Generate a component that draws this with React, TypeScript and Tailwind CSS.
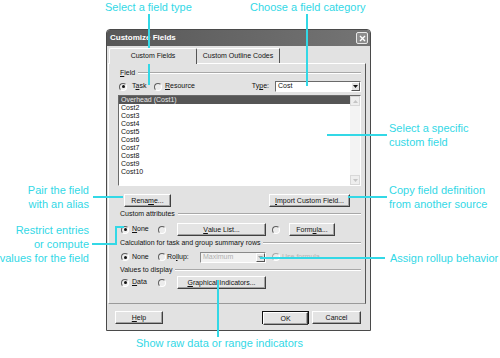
import type { ReactNode } from 'react';

// Small Win2000-style dialog with cyan callouts around it

function Radio({ on, dim }: { on?: boolean; dim?: boolean }) {
  return (
    <span
      className={`flex h-[8px] w-[8px] shrink-0 items-center justify-center rounded-full border border-r-white border-b-white bg-[#ececec] ${
        dim ? 'border-t-[#a8a8a8] border-l-[#a8a8a8]' : 'border-t-[#5e5e5e] border-l-[#5e5e5e]'
      }`}
    >
      {on && <span className="h-[3px] w-[3px] rounded-full bg-[#111]" />}
    </span>
  );
}

function Btn({ className = '', children }: { className?: string; children: ReactNode }) {
  return (
    <div
      className={`flex h-[13px] shrink-0 items-center justify-center border border-t-white border-l-white border-r-[#404040] border-b-[#404040] bg-[#e4e4e4] text-[7px] leading-none text-[#111] shadow-[inset_-1px_-1px_0_#a2a2a2] ${className}`}
    >
      {children}
    </div>
  );
}

function Group({ className = '', children }: { className?: string; children: ReactNode }) {
  return (
    <div className={`flex h-[10px] items-center gap-[3px] pl-[2px] ${className}`}>
      <span className="text-[7px] leading-[10px]">{children}</span>
      <div className="h-[2px] flex-1 border-t border-b border-t-[#a8a8a8] border-b-white" />
    </div>
  );
}

function Arrow({ dim }: { dim?: boolean }) {
  return (
    <div className="flex h-full w-[9px] items-center justify-center border border-t-white border-l-white border-r-[#555] border-b-[#555] bg-[#e4e4e4]">
      <svg width="5" height="3" viewBox="0 0 5 3">
        <path d="M0 0h5L2.5 3z" fill={dim ? '#9a9a9a' : '#111'} />
      </svg>
    </div>
  );
}

const items = ['Cost2', 'Cost3', 'Cost4', 'Cost5', 'Cost6', 'Cost7', 'Cost8', 'Cost9', 'Cost10'];

function Dialog() {
  return (
    <div className="flex h-[302px] w-[265px] flex-col rounded-t-[4px] border border-[#4a4a4a] bg-[#e2e2e2] text-[7px] text-[#111]">
      {/* barre de titre */}
      <div className="flex h-[16px] items-center justify-between rounded-t-[3px] bg-gradient-to-r from-[#585858] to-[#747474] pl-[3px] pr-[2px]">
        <span className="text-[8px] font-bold leading-none text-white">Customize Fields</span>
        <div className="flex h-[12px] w-[12px] items-center justify-center rounded-[2px] border border-[#e8e8e8] bg-[#8d8d8d]">
          <svg width="7" height="7" viewBox="0 0 7 7">
            <path d="M1 1l5 5M6 1L1 6" stroke="#fff" strokeWidth="1.4" />
          </svg>
        </div>
      </div>

      {/* onglets */}
      <div className="mt-[1px] flex h-[16px] items-end pl-[2px]">
        <div className="relative z-10 -mb-px flex h-[16px] w-[88px] items-center justify-center rounded-t-[2px] border-t border-l border-t-white border-l-white border-r border-r-[#555] bg-[#e2e2e2]">
          Custom Fields
        </div>
        <div className="flex h-[15px] w-[83px] items-center justify-center border-t border-t-white border-r border-r-[#555]">
          Custom Outline Codes
        </div>
      </div>

      {/* panneau */}
      <div className="ml-[1px] mr-[4px] flex h-[241px] flex-col border border-t-white border-l-white border-r-[#555] border-b-[#9a9a9a] pl-[9px] pr-[4px] pt-[4px]">
        <Group>
          <u>F</u>ield
        </Group>

        <div className="mt-[3px] flex h-[11px] items-center">
          <div className="flex w-[36px] items-center gap-[5px] pl-[1px]">
            <Radio on />
            <span>
              T<u>a</u>sk
            </span>
          </div>
          <div className="flex items-center gap-[3px]">
            <Radio />
            <span>
              <u>R</u>esource
            </span>
          </div>
          <span className="ml-auto mr-[6px]">
            Ty<u>p</u>e:
          </span>
          <div className="flex h-[11px] w-[86px] items-center border border-t-[#6a6a6a] border-l-[#6a6a6a] border-r-white border-b-white bg-white pl-[2px]">
            <span className="flex-1">Cost</span>
            <Arrow />
          </div>
        </div>

        {/* liste des champs */}
        <div className="mt-[3px] flex h-[91px] border border-t-[#6a6a6a] border-l-[#6a6a6a] border-r-white border-b-white bg-white">
          <div className="flex flex-1 flex-col">
            <div className="h-[8px] bg-[#555] pl-[2px] leading-[8px] text-[#e6e6e6]">Overhead (Cost1)</div>
            {items.map(it => (
              <div key={it} className="h-[8px] pl-[2px] leading-[8px]">
                {it}
              </div>
            ))}
          </div>
          <div className="flex w-[10px] flex-col justify-between bg-[#f3f3f3]">
            <div className="flex h-[10px] items-center justify-center border border-[#d8d8d8] bg-[#eeeeee]">
              <svg width="5" height="3" viewBox="0 0 5 3">
                <path d="M0 3h5L2.5 0z" fill="#c4c4c4" />
              </svg>
            </div>
            <div className="flex h-[10px] items-center justify-center border border-[#d8d8d8] bg-[#eeeeee]">
              <svg width="5" height="3" viewBox="0 0 5 3">
                <path d="M0 0h5L2.5 3z" fill="#c4c4c4" />
              </svg>
            </div>
          </div>
        </div>

        <div className="mt-[8px] flex h-[13px] justify-between pl-[6px] pr-[11px]">
          <Btn className="w-[47px]">
            Rena<u>m</u>e...
          </Btn>
          <Btn className="w-[81px]">
            <u>I</u>mport Custom Field...
          </Btn>
        </div>

        <Group className="mt-[2px]">Custom attributes</Group>

        <div className="mt-[4px] flex h-[13px] items-center pl-[3px]">
          <div className="flex w-[37px] items-center gap-[3px]">
            <Radio on />
            <span>
              <u>N</u>one
            </span>
          </div>
          <Radio />
          <Btn className="ml-[11px] w-[89px]">
            <u>V</u>alue List...
          </Btn>
          <div className="ml-[6px]">
            <Radio />
          </div>
          <Btn className="ml-[9px] w-[46px]">
            Form<u>u</u>la...
          </Btn>
        </div>

        <Group className="mt-[2px]">Calculation for task and group summary rows</Group>

        <div className="mt-[3px] flex h-[12px] items-center pl-[3px]">
          <div className="flex w-[37px] items-center gap-[3px]">
            <Radio on />
            <span>None</span>
          </div>
          <div className="flex w-[42px] items-center gap-[1px]">
            <Radio />
            <span>
              Ro<u>l</u>lup:
            </span>
          </div>
          <div className="flex h-[11px] w-[66px] items-center border border-t-[#8a8a8a] border-l-[#8a8a8a] border-r-white border-b-white bg-[#f1f1f1] pl-[2px]">
            <span className="flex-1 text-[#b0b0b0]">Maximum</span>
            <Arrow dim />
          </div>
          <div className="ml-[6px] flex items-center gap-[2px]">
            <Radio dim />
            <span className="text-[#b4b4b4]">Use formula</span>
          </div>
        </div>

        <Group className="mt-[2px]">Values to display</Group>

        <div className="mt-[1px] flex h-[13px] items-center pl-[3px]">
          <div className="flex w-[37px] items-center gap-[3px]">
            <Radio on />
            <span>
              <u>D</u>ata
            </span>
          </div>
          <Radio />
          <Btn className="ml-[11px] w-[89px]">
            <u>G</u>raphical Indicators...
          </Btn>
        </div>
      </div>

      {/* boutons du bas */}
      <div className="mt-[7px] flex h-[13px] pl-[8px] pr-[9px]">
        <Btn className="w-[48px]">
          <u>H</u>elp
        </Btn>
        <div className="flex-1" />
        <div className="border border-[#111]">
          <Btn className="h-[11px] w-[45px]">OK</Btn>
        </div>
        <Btn className="ml-[3px] w-[49px]">Cancel</Btn>
      </div>
    </div>
  );
}

export default function App() {
  return (
    <div className="relative h-[358px] w-[500px] overflow-hidden bg-white pl-[106px] pt-[29px] font-['Liberation_Sans',Arial,sans-serif]">
      <Dialog />

      {/* légendes */}
      <div className="absolute left-[105px] top-[1px] text-[11px] leading-[13px] text-[#33d8e6]">Select a field type</div>
      <div className="absolute left-[148px] top-[14px] h-[71px] w-[2px] bg-[#33d8e6]" />

      <div className="absolute left-[250px] top-[1px] text-[11px] leading-[13px] text-[#33d8e6]">Choose a field category</div>
      <div className="absolute left-[306px] top-[14px] h-[72px] w-[2px] bg-[#33d8e6]" />

      <div className="absolute left-[389px] top-[121px] text-[11px] leading-[14px] text-[#33d8e6]">
        Select a specific
        <br />
        custom field
      </div>
      <div className="absolute left-[327px] top-[134px] h-[2px] w-[60px] bg-[#33d8e6]" />

      <div className="absolute left-[389px] top-[183px] text-[11px] leading-[14px] text-[#33d8e6]">
        Copy field definition
        <br />
        from another source
      </div>
      <div className="absolute left-[348px] top-[196px] h-[2px] w-[39px] bg-[#33d8e6]" />

      <div className="absolute right-[411px] top-[183px] whitespace-nowrap text-right text-[11px] leading-[14px] text-[#33d8e6]">
        Pair the field
        <br />
        with an alias
      </div>
      <div className="absolute left-[93px] top-[196px] h-[2px] w-[30px] bg-[#33d8e6]" />

      <div className="absolute right-[411px] top-[223px] whitespace-nowrap text-right text-[11px] leading-[14px] text-[#33d8e6]">
        Restrict entries
        <br />
        or compute
        <br />
        values for the field
      </div>
      <div className="absolute left-[92px] top-[243px] h-[2px] w-[25px] bg-[#33d8e6]" />
      <div className="absolute left-[115px] top-[226px] h-[19px] w-[2px] bg-[#33d8e6]" />
      <div className="absolute left-[115px] top-[226px] h-[2px] w-[9px] bg-[#33d8e6]" />

      <div className="absolute left-[390px] top-[251px] whitespace-nowrap text-[11px] leading-[14px] text-[#33d8e6]">Assign rollup behavior</div>
      <div className="absolute left-[260px] top-[257px] h-[2px] w-[125px] bg-[#33d8e6]" />

      <div className="absolute left-[136px] top-[336px] whitespace-nowrap text-[11px] leading-[14px] text-[#33d8e6]">
        Show raw data or range indicators
      </div>
      <div className="absolute left-[217px] top-[280px] h-[57px] w-[2px] bg-[#33d8e6]" />
    </div>
  );
}
